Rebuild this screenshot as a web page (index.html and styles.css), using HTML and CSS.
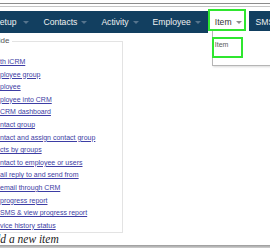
FILE: index.html
```html
<!DOCTYPE html>
<html>
<head>
    <meta charset="UTF-8">
    <title>Add a new item</title>
    <link rel="stylesheet" href="styles.css">
</head>
<body>

<div class="topline"></div>

<ul class="menu">
    <li class="first">Setup<span class="caret"></span></li>
    <li>Contacts<span class="caret"></span></li>
    <li>Activity<span class="caret"></span></li>
    <li>Employee<span class="caret"></span></li>
    <li class="active">Item<span class="caret"></span>
        <span class="mark"></span>
        <div class="dropdown">
            <a href="javascript:;">Item</a>
        </div>
    </li>
    <li>SMS<span class="caret"></span></li>
</ul>

<fieldset class="guide">
    <legend>Guide</legend>
    <ul class="links">
        <li><a href="javascript:;">th iCRM</a></li>
        <li><a href="javascript:;">ployee group</a></li>
        <li><a href="javascript:;">ployee</a></li>
        <li><a href="javascript:;">ployee into CRM</a></li>
        <li><a href="javascript:;">CRM dashboard</a></li>
        <li><a href="javascript:;">ntact group</a></li>
        <li><a href="javascript:;">ntact and assign contact group</a></li>
        <li><a href="javascript:;">cts by groups</a></li>
        <li><a href="javascript:;">ntact to employee or users</a></li>
        <li><a href="javascript:;">ail reply to and send from</a></li>
        <li><a href="javascript:;">email through CRM</a></li>
        <li><a href="javascript:;">progress report</a></li>
        <li><a href="javascript:;">SMS &amp; view progress report</a></li>
        <li><a href="javascript:;">vice history status</a></li>
    </ul>
</fieldset>

<h2 class="caption">Add a new item</h2>
<div class="bottombar"></div>

</body>
</html>
```

FILE: styles.css
```css
* { margin: 0; padding: 0;}
body { width: 270px; height: 250px; overflow: hidden; background: #fff; font-family: "Liberation Sans", Arial, sans-serif;}

.topline { height: 2px; margin-top: 3px; margin-bottom: 4px; border-top: 1px solid #8c8c8c; border-bottom: 1px solid #c6c6c6;}

.menu { display: flex; height: 22px; margin-left: -10px; background: #123f60; list-style: none; font-size: 8.6px;}
.menu li { flex-shrink: 0; display: flex; align-items: center; padding: 0 7px; color: #f0f0f0; white-space: nowrap; position: relative;}
.menu .caret { width: 0; height: 0; margin-left: 4px; border-left: 3px solid transparent; border-right: 3px solid transparent; border-top: 3px solid #57758d;}
.menu li.first { padding-left: 4px;}
.menu li.first .caret { margin-left: 7px;}
.menu li.active { background: #fff; color: #333;}
.menu li.active .caret { border-top-color: #8c8c8c;}
.mark { position: absolute; left: 0; top: -2px; width: 34px; height: 18px; border: 2px solid #2fe62f;}

.dropdown { position: absolute; top: 20px; left: 4px; width: 70px; height: 34px; background: #fff; border-left: 1px solid #b5b5b5; border-bottom: 1px solid #b5b5b5; box-shadow: 1px 1px 2px rgba(0,0,0,.15); z-index: 2;}
.dropdown a { display: block; width: 26px; height: 17px; margin: 6px 0 0 -1px; padding-left: 1px; border: 2px solid #2fe62f; font-size: 7px; line-height: 12px; color: #5a5a5a; text-decoration: none;}

.guide { box-sizing: border-box; width: 153px; margin: 3px 0 0 -30px; padding: 0; border: 1px solid #e3e3e3; min-inline-size: 0;}
.guide legend { margin-left: 15px; padding: 0 3px 0 2px; font-size: 8px; line-height: 10px; color: #555;}
.links { list-style: none; padding: 10px 0 0 29px; font-size: 7px; line-height: 12.6px; white-space: nowrap;}
.links a { color: #3d3da4; text-decoration: underline;}

.caption { margin-left: -12.5px; font: italic normal 11.5px/12px "Liberation Serif", "Times New Roman", serif; color: #222; white-space: nowrap;}
.bottombar { height: 3px; background: linear-gradient(#999, #d2d2d2);}
```
